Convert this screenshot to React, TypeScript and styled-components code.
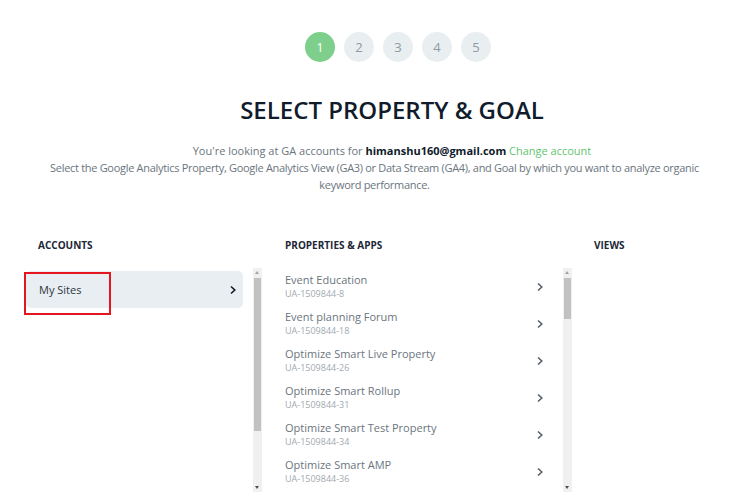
import React from 'react'
import styled, { createGlobalStyle } from 'styled-components'

const GlobalStyle = createGlobalStyle`
  body {
    margin: 0;
    background: #ffffff;
    font-family: 'Open Sans', 'DejaVu Sans', sans-serif;
    color: #6b757e;
  }
`

const Page = styled.div`
  width: 749px;
  padding-top: 32px;
`

const Header = styled.div`
  padding-left: 35px;
`

const Stepper = styled.div`
  display: flex;
  justify-content: center;
  gap: 9px;
  padding-left: 12px;
`

const Step = styled.div<{ $active?: boolean }>`
  width: 30px;
  height: 30px;
  border-radius: 50%;
  display: flex;
  align-items: center;
  justify-content: center;
  font-size: 13px;
  background: ${(p) => (p.$active ? '#7ecf8b' : '#e9eff1')};
  color: ${(p) => (p.$active ? '#ffffff' : '#8d9aa3')};
`

const Title = styled.h1`
  margin: 33px 0 0;
  text-align: center;
  font-weight: 600;
  font-size: 24px;
  line-height: 30px;
  color: #101b2b;
`

const IntroLine = styled.p<{ $shift?: number; $tight?: boolean }>`
  margin: 0;
  padding-left: ${(p) => p.$shift || 0}px;
  text-align: center;
  font-size: 11px;
  line-height: 17px;
  letter-spacing: ${(p) => (p.$tight ? '-0.3px' : '0')};
  color: #6b757e;

  b {
    color: #101b2b;
  }
`

const Intro = styled.div`
  margin: 17px auto 0;
  width: 690px;
`

const Link = styled.a`
  color: #5fc46e;
  text-decoration: none;
`

const Columns = styled.div`
  display: flex;
  margin-top: 44px;
  padding-left: 26px;
`

const Column = styled.div<{ $width?: number; $offset?: number }>`
  width: ${(p) => (p.$width ? `${p.$width}px` : 'auto')};
  margin-left: ${(p) => p.$offset || 0}px;
`

const Heading = styled.div<{ $indent?: number }>`
  padding-left: ${(p) => p.$indent || 0}px;
  font-size: 10px;
  line-height: 16px;
  font-weight: 700;
  text-transform: uppercase;
  color: #1d2736;
`

const ListWrap = styled.div`
  position: relative;
  display: flex;
  gap: 10px;
  height: 224px;
  margin-top: 15px;
`

const Rows = styled.div`
  flex: 1;
  overflow: hidden;
`

const AccountItem = styled.div`
  margin-top: 3px;
  height: 37px;
  display: flex;
  align-items: center;
  justify-content: space-between;
  padding: 0 7px 0 13px;
  border-radius: 5px;
  background: #e8eef1;
  font-size: 11px;
  color: #2c3643;
`

const PropertyRow = styled.div`
  display: flex;
  align-items: center;
  justify-content: space-between;
  padding: 5px 10px 4px 0;
`

const PropertyName = styled.div`
  font-size: 11px;
  line-height: 14px;
  color: #6b757e;
`

const PropertyId = styled.div`
  font-size: 9px;
  line-height: 14px;
  color: #a1a9b0;
`

const Track = styled.div`
  position: relative;
  width: 9px;
  background: #f0f0f0;
  flex-shrink: 0;
`

const Thumb = styled.div<{ $height: number }>`
  margin: 10px 1px 0;
  height: ${(p) => p.$height}px;
  background: #c1c1c1;
`

const Arrow = styled.div<{ $down?: boolean }>`
  position: absolute;
  left: 2px;
  ${(p) => (p.$down ? 'bottom: 3px;' : 'top: 3px;')}
  width: 0;
  height: 0;
  border-left: 2.5px solid transparent;
  border-right: 2.5px solid transparent;
  ${(p) => (p.$down ? 'border-top: 3px solid #505050;' : 'border-bottom: 3px solid #a3a3a3;')}
`

const Highlight = styled.div`
  position: absolute;
  left: -2px;
  top: 4px;
  width: 83px;
  height: 39px;
  border: 2px solid #e3161f;
`

const Chevron: React.FC<{ color?: string }> = ({ color = '#3b4651' }) => (
  <svg width="6" height="10" viewBox="0 0 6 10">
    <polyline points="1,1.5 4.8,5 1,8.5" fill="none" stroke={color} strokeWidth="1.6" />
  </svg>
)

const Scrollbar: React.FC<{ thumb: number }> = ({ thumb }) => (
  <Track>
    <Arrow />
    <Thumb $height={thumb} />
    <Arrow $down />
  </Track>
)

const properties = [
  ['Event Education', 'UA-1509844-8'],
  ['Event planning Forum', 'UA-1509844-18'],
  ['Optimize Smart Live Property', 'UA-1509844-26'],
  ['Optimize Smart Rollup', 'UA-1509844-31'],
  ['Optimize Smart Test Property', 'UA-1509844-34'],
  ['Optimize Smart AMP', 'UA-1509844-36'],
]

const App: React.FC = () => {
  return (
    <Page>
      <GlobalStyle />
      <Header>
        <Stepper>
          {[1, 2, 3, 4, 5].map((n) => (
            <Step key={n} $active={n === 1}>
              {n}
            </Step>
          ))}
        </Stepper>
        <Title>SELECT PROPERTY &amp; GOAL</Title>
      </Header>
      <Intro>
        <IntroLine $shift={35}>
          You're looking at GA accounts for <b>himanshu160@gmail.com</b> <Link href="#">Change account</Link>
        </IntroLine>
        <IntroLine $tight>
          Select the Google Analytics Property, Google Analytics View (GA3) or Data Stream (GA4), and Goal by which
          you want to analyze organic keyword performance.
        </IntroLine>
      </Intro>
      <Columns>
        <Column $width={236}>
          <Heading $indent={12}>Accounts</Heading>
          <ListWrap>
            <Rows>
              <AccountItem>
                My Sites
                <Chevron color="#111820" />
              </AccountItem>
            </Rows>
            <Scrollbar thumb={153} />
            <Highlight />
          </ListWrap>
        </Column>
        <Column $width={287} $offset={23}>
          <Heading>Properties &amp; Apps</Heading>
          <ListWrap>
            <Rows>
              {properties.map(([name, id]) => (
                <PropertyRow key={id}>
                  <div>
                    <PropertyName>{name}</PropertyName>
                    <PropertyId>{id}</PropertyId>
                  </div>
                  <Chevron color="#56606a" />
                </PropertyRow>
              ))}
            </Rows>
            <Scrollbar thumb={41} />
          </ListWrap>
        </Column>
        <Column $offset={22}>
          <Heading>Views</Heading>
        </Column>
      </Columns>
    </Page>
  )
}

export default App
